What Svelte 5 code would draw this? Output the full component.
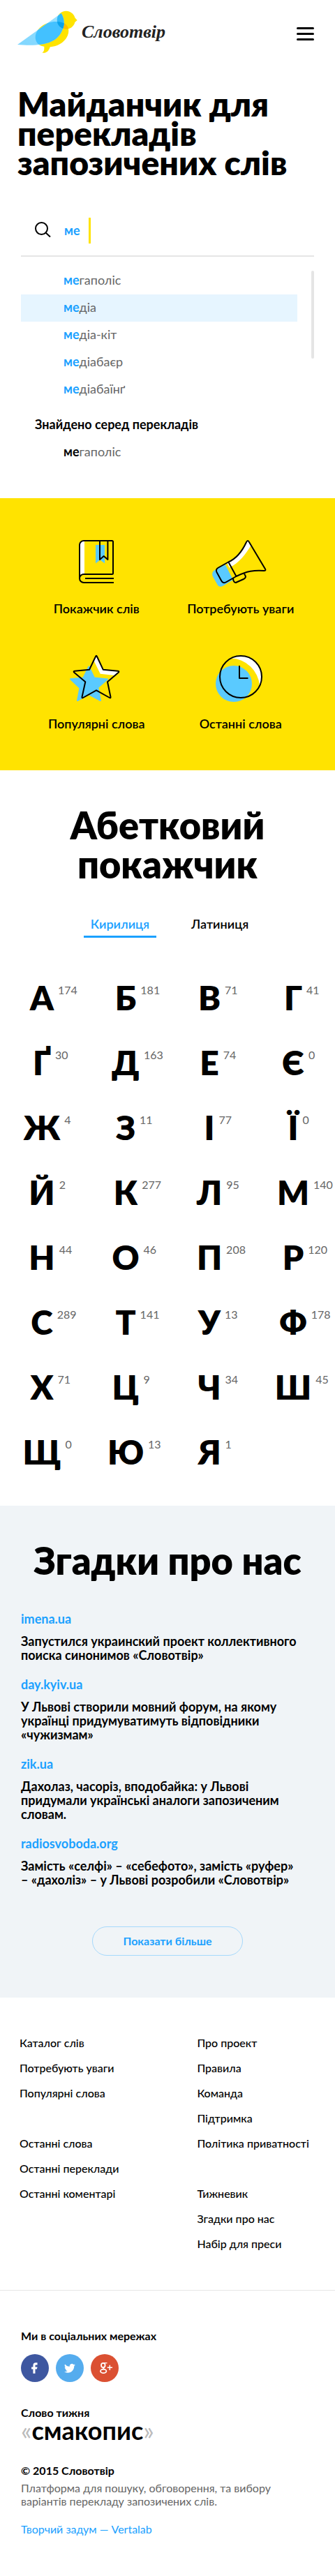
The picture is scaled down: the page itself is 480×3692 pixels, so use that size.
<script>
  let query = $state('ме');
  let script = $state('cyrillic');

  const suggestions = ['гаполіс', 'діа', 'діа-кіт', 'діабаєр', 'діабаїнґ'];
  const selected = 1;

  const letters = [
    ['А', 174], ['Б', 181], ['В', 71], ['Г', 41],
    ['Ґ', 30], ['Д', 163], ['Е', 74], ['Є', 0],
    ['Ж', 4], ['З', 11], ['І', 77], ['Ї', 0],
    ['Й', 2], ['К', 277], ['Л', 95], ['М', 140],
    ['Н', 44], ['О', 46], ['П', 208], ['Р', 120],
    ['С', 289], ['Т', 141], ['У', 13], ['Ф', 178],
    ['Х', 71], ['Ц', 9], ['Ч', 34], ['Ш', 45],
    ['Щ', 0], ['Ю', 13], ['Я', 1]
  ];

  const mentions = [
    ['imena.ua', 'Запустился украинский проект коллективного поиска синонимов «Словотвір»'],
    ['day.kyiv.ua', 'У Львові створили мовний форум, на якому українці придумуватимуть відповідники «чужизмам»'],
    ['zik.ua', 'Дахолаз, часоріз, вподобайка: у Львові придумали українські аналоги запозиченим словам.'],
    ['radiosvoboda.org', 'Замість «селфі» – «себефото», замість «руфер» – «дахоліз» – у Львові розробили «Словотвір»']
  ];

  const footerColumns = [
    [
      ['Каталог слів', 'Потребують уваги', 'Популярні слова'],
      ['Останні слова', 'Останні переклади', 'Останні коментарі']
    ],
    [
      ['Про проект', 'Правила', 'Команда', 'Підтримка', 'Політика приватності'],
      ['Тижневик', 'Згадки про нас', 'Набір для преси']
    ]
  ];
</script>

<header class="top">
  <a class="logo" href="#home">
    <svg width="86" height="62" viewBox="0 0 86 62" aria-hidden="true">
      <defs>
        <linearGradient id="wing" x1="0" y1="1" x2="1" y2="0">
          <stop offset="0" stop-color="#7fd6ff" />
          <stop offset="1" stop-color="#9ce2ff" />
        </linearGradient>
        <clipPath id="clip-wing"><path d="M0 49L62.7 4C68 12 68 22 63 31C55 46 38 52 0 49Z" /></clipPath>
        <clipPath id="clip-head"><circle cx="69.7" cy="13.7" r="13" /></clipPath>
      </defs>
      <path fill="#ffe300" d="M38.3 50C38.5 56 38.500 58.500 35.500 60.500C41 62 45.500 58 47 51Z" />
      <path fill="#ffe300" d="M25.700 38C26 26 40 16 55 16C66 16 73.300 20 73.300 29C73 42 60 52.300 45 52.300C33 52.300 25.700 48 25.700 38Z" />
      <circle fill="#ffe300" cx="69.7" cy="13.7" r="13" />
      <path fill="#ffe300" d="M81.500 9.500L85.700 14L81.500 17.500Z" />
      <g clip-path="url(#clip-head)">
        <path fill="#ffbd00" d="M25.700 38C26 26 40 16 55 16C66 16 73.300 20 73.300 29C73 42 60 52.300 45 52.300C33 52.300 25.700 48 25.700 38Z" />
      </g>
      <path fill="url(#wing)" d="M0 49L62.700 4C68 12 68 22 63 31C55 46 38 52 0 49Z" />
      <g clip-path="url(#clip-wing)">
        <path fill="#43c1ff" d="M25.700 38C26 26 40 16 55 16C66 16 73.300 20 73.300 29C73 42 60 52.300 45 52.300C33 52.300 25.700 48 25.700 38Z" />
        <circle fill="#31b9f8" cx="69.7" cy="13.7" r="13" />
        <g clip-path="url(#clip-head)">
          <path fill="#0aa2ea" d="M25.700 38C26 26 40 16 55 16C66 16 73.300 20 73.300 29C73 42 60 52.300 45 52.300Z" />
        </g>
      </g>
    </svg>
    <span>Словотвір</span>
  </a>
  <button class="burger" aria-label="Меню">
    <i></i><i></i><i></i>
  </button>
</header>

<main>
  <section class="hero">
    <h1>Майданчик для перекладів запозичених слів</h1>

    <div class="finder">
      <label class="search">
        <svg width="24" height="24" viewBox="0 0 24 24" aria-hidden="true">
          <circle cx="9.500" cy="9.500" r="8.500" />
          <path d="M15.500 15.500L22 21.500" />
        </svg>
        <input bind:value={query} aria-label="Пошук слова" />
        <i class="caret"></i>
      </label>

      <div class="results">
        <ul>
          {#each suggestions as rest, i}
            <li class:active={i === selected}><a href="#word"><b>ме</b>{rest}</a></li>
          {/each}
        </ul>
        <i class="scrollbar"></i>
      </div>

      <h2 class="found">Знайдено серед перекладів</h2>
      <ul class="translations">
        <li><a href="#word"><b>ме</b>гаполіс</a></li>
      </ul>
    </div>
  </section>

  <nav class="shortcuts">
    <a href="#index">
      <svg width="50" height="62" viewBox="0 0 50 62" aria-hidden="true">
        <path fill="#fff" d="M1 50V7a6 6 0 0 1 6-6h1v48H5z" />
        <path fill="#5acaff" d="M24 7h13v26.500l-6.500-5-6.500 5z" />
        <path class="line" d="M50 61H7a6 6 0 0 1-6-6V7a6 6 0 0 1 6-6h40.500A1.500 1.500 0 0 1 49 2.500V47.500a1.500 1.500 0 0 1-1.500 1.500H7a6 6 0 0 0-6 6M9 55h41M30 1v27l5.700-5 5.700 5V1" />
      </svg>
      Покажчик слів
    </a>
    <a href="#attention">
      <svg width="82" height="62" viewBox="0 0 82 62" aria-hidden="true">
        <path fill="#5acaff" d="M3 43.500L18.700 35L30 57L16 65.500C11 68.500 8.500 66 7 63L1 52.500C-.5 49 0 45.500 3 43.500Z" />
        <path fill="#fff" d="M51 1L55.500 8C48 20 39 33 24.500 39.500L21 32C36 25 43 14 51 1Z" />
        <path class="line" d="M23.300 31.500C36 26 43 16 49 3Q51 -1 53 3L76 41.500Q77.500 44 74 44C60 43 50 44.500 34.500 52L23.300 31.500L9 39.500Q4.500 42 6.500 46L13 58Q15.500 63 20.500 60L34.500 52M30 55L30.500 58Q32 62 35 60.500L45 56Q49 54 47.500 51L46 48.500" />
      </svg>
      Потребують уваги
    </a>
    <a href="#popular">
      <svg width="76" height="62" viewBox="0 0 76 62" aria-hidden="true">
        <path fill="#5acaff" stroke="#5acaff" stroke-width="2" stroke-linejoin="round" d="M27.300 16.500L35 32.500L54 34.500L40.300 46.300L44 65L27.300 56L11 65L14.500 47L1 34.300L19.500 32.500Z" />
        <path fill="#fff" d="M38 2L47.700 20.700L70 23.500L64 29L43.700 26.700L34.500 8Z" />
        <path class="line" d="M39 2L47.700 20.700L69 22.800Q71.500 23.200 69.500 25L54 38.300L58.500 60Q58.800 62 57 61L38 50.300L19 61Q17.200 62 17.500 60L22.300 38.300L6.500 25Q4.500 23.200 7 22.800L28 20.700L37 2Q38 -.5 39 2Z" />
      </svg>
      Популярні слова
    </a>
    <a href="#latest">
      <svg width="72" height="62" viewBox="0 0 72 62" aria-hidden="true">
        <circle fill="#5acaff" cx="26" cy="41" r="26" />
        <path fill="#fff" d="M22 4.300A30 30 0 0 1 63 43.500A43 43 0 0 0 22 4.300Z" />
        <circle class="line" cx="36" cy="31" r="30" />
        <path class="line" d="M34 15V33H46.500" />
      </svg>
      Останні слова
    </a>
  </nav>

  <section class="alphabet">
    <h2>Абетковий покажчик</h2>
    <div class="tabs">
      <button class:on={script === 'cyrillic'} onclick={() => (script = 'cyrillic')}>Кирилиця</button>
      <button class:on={script === 'latin'} onclick={() => (script = 'latin')}>Латиниця</button>
    </div>
    <div class="letters">
      {#each letters as [letter, count]}
        <a href="#letter"><b>{letter}</b><span>{count}</span></a>
      {/each}
    </div>
  </section>

  <section class="mentions">
    <h2>Згадки про нас</h2>
    {#each mentions as [source, title]}
      <article>
        <a href="#source">{source}</a>
        <p>{title}</p>
      </article>
    {/each}
    <button class="more">Показати більше</button>
  </section>
</main>

<footer>
  <nav class="links">
    {#each footerColumns as column}
      <div>
        {#each column as group}
          <ul>
            {#each group as item}
              <li><a href="#page">{item}</a></li>
            {/each}
          </ul>
        {/each}
      </div>
    {/each}
  </nav>

  <div class="about">
    <h3>Ми в соціальних мережах</h3>
    <div class="social">
      <a href="#facebook" aria-label="Facebook">
        <svg width="40" height="40" viewBox="0 0 40 40" aria-hidden="true">
          <circle cx="20" cy="20" r="20" fill="#3e57a0" />
          <path fill="#fff" transform="translate(9.700 10.800) scale(.77)" d="M18 2h-3a5 5 0 0 0-5 5v3H7v4h3v8h4v-8h3l1-4h-4V7a1 1 0 0 1 1-1h3z" />
        </svg>
      </a>
      <a href="#twitter" aria-label="Twitter">
        <svg width="40" height="40" viewBox="0 0 40 40" aria-hidden="true">
          <circle cx="20" cy="20" r="20" fill="#55acee" />
          <path fill="#fff" transform="translate(12 12.400) scale(.66)" d="M23.953 4.570a10 10 0 01-2.825.775 4.958 4.958 0 002.163-2.723c-.951.555-2.005.959-3.127 1.184a4.920 4.920 0 00-8.384 4.482C7.690 8.095 4.067 6.130 1.640 3.162a4.822 4.822 0 00-.666 2.475c0 1.710.870 3.213 2.188 4.096a4.904 4.904 0 01-2.228-.616v.06a4.923 4.923 0 003.946 4.827 4.996 4.996 0 01-2.212.085 4.936 4.936 0 004.604 3.417 9.867 9.867 0 01-6.102 2.105c-.39 0-.779-.023-1.170-.067a13.995 13.995 0 007.557 2.209c9.053 0 13.998-7.496 13.998-13.985 0-.21 0-.42-.015-.63A9.935 9.935 0 0024 4.590z" />
        </svg>
      </a>
      <a href="#google" aria-label="Google+">
        <svg width="40" height="40" viewBox="0 0 40 40" aria-hidden="true">
          <circle cx="20" cy="20" r="20" fill="#db5032" />
          <g fill="none" stroke="#fff">
            <ellipse cx="17.800" cy="16" rx="2.800" ry="3.200" stroke-width="1.800" />
            <path stroke-width="1.300" d="M17.500 12.700H23.500" />
            <path stroke-width="1.800" d="M19.800 18.500Q17.300 20 18.800 21.300" />
            <ellipse cx="18.200" cy="24.400" rx="4.200" ry="2.700" stroke-width="1.800" />
            <path stroke-width="1.500" d="M27.300 15.700V23M23.700 19.300H31" />
          </g>
        </svg>
      </a>
    </div>

    <h3>Слово тижня</h3>
    <p class="word"><i>«</i>смакопис<i>»</i></p>

    <h3>© 2015 Словотвір</h3>
    <p class="description">Платформа для пошуку, обговорення, та вибору варіантів перекладу запозичених слів.</p>
    <a class="credit" href="#vertalab">Творчий задум — Vertalab</a>
  </div>
</footer>

<style>
  :global(body) {
    background: #fff;
    color: #000;
    font-family: Lato, Roboto, sans-serif;
    font-size: 18px;
    line-height: 24px;
  }

  h1, h2, h3, p, ul {
    margin: 0;
    padding: 0;
  }

  ul {
    list-style: none;
  }

  a {
    color: inherit;
    text-decoration: none;
  }

  button, input {
    padding: 0;
    border: 0;
    background: none;
    font: inherit;
  }

  svg {
    display: block;
    overflow: visible;
  }

  h2 {
    font-size: 54px;
    line-height: 56px;
    font-weight: 800;
    text-align: center;
  }

  .top {
    display: flex;
    justify-content: space-between;
    align-items: center;
    padding: 15px 30px 15px 25px;
  }

  .logo {
    display: flex;
    align-items: center;
    gap: 6px;
    color: #222;
    font: italic 700 26px/40px "Liberation Serif", serif;
  }

  .burger {
    display: flex;
    flex-direction: column;
    gap: 5px;
    width: 25px;
    padding-top: 5px;
  }

  .burger i {
    height: 3px;
    border-radius: 2px;
    background: #000;
  }

  .hero {
    padding: 36px 30px 46px 25px;
  }

  h1 {
    font-size: 48px;
    line-height: 42px;
    font-weight: 800;
  }

  .finder {
    margin: 40px 0 0 5px;
  }

  .search {
    position: relative;
    display: flex;
    align-items: center;
    gap: 18px;
    height: 72px;
    padding-left: 20px;
    border-bottom: 2px solid #e5e5e5;
  }

  .search svg {
    fill: none;
    stroke: #000;
    stroke-width: 2;
  }

  .search input {
    flex: 1;
    min-width: 0;
    color: #1ba1ff;
    font-weight: 700;
    outline: none;
  }

  .caret {
    position: absolute;
    left: 97px;
    top: 18px;
    width: 3px;
    height: 37px;
    background: #ffe300;
  }

  .results {
    display: flex;
    gap: 20px;
    padding-top: 15px;
  }

  .results ul {
    flex: 1;
  }

  .finder li {
    padding: 0 0 3px 61px;
    color: #666;
    line-height: 36px;
  }

  .finder li.active {
    background: #e6f5ff;
  }

  .results b {
    color: #1ba1ff;
  }

  .translations b {
    color: #000;
  }

  .scrollbar {
    width: 4px;
    height: 126px;
    margin-top: 5px;
    border-radius: 2px;
    background: #e5e5e5;
  }

  .found {
    margin-top: 12px;
    padding: 0 20px 3px;
    font-size: 18px;
    line-height: 36px;
    font-weight: 700;
    text-align: left;
  }

  .shortcuts {
    display: grid;
    grid-template-columns: 1fr 1fr;
    gap: 55px 30px;
    padding: 60px 47px 55px 50px;
    background: #ffe300;
    font-weight: 600;
  }

  .shortcuts a {
    display: flex;
    flex-direction: column;
    align-items: center;
    gap: 24px;
  }

  .line {
    fill: none;
    stroke: #000;
    stroke-width: 2;
    stroke-linejoin: round;
  }

  .alphabet {
    padding: 51px 0 47px;
  }

  .alphabet h2 {
    padding: 0 60px;
  }

  .tabs {
    display: flex;
    justify-content: center;
    gap: 40px;
    margin: 45px 0 56px;
    padding-left: 6px;
  }

  .tabs button {
    padding: 0 10px 5px;
    border-bottom: 3px solid transparent;
    font-weight: 600;
    cursor: pointer;
  }

  .tabs .on {
    border-color: #1ba1ff;
    color: #1ba1ff;
  }

  .letters {
    display: grid;
    grid-template-columns: repeat(4, 1fr);
    row-gap: 33px;
  }

  .letters a {
    display: grid;
    grid-template-columns: 1fr auto 1fr;
    column-gap: 6px;
  }

  .letters b {
    grid-column: 2;
    font-size: 48px;
    line-height: 60px;
    font-weight: 800;
  }

  .letters span {
    padding-top: 9px;
    color: #666;
    font-size: 16px;
    line-height: 20px;
  }

  .mentions {
    padding: 51px 30px 60px;
    background: #f0f4f7;
    font-weight: 700;
    line-height: 20px;
  }

  .mentions h2 {
    margin: 0 -20px 45px;
  }

  article {
    margin-bottom: 22px;
    padding-right: 20px;
  }

  article a {
    display: block;
    margin-bottom: 12px;
    color: #1ba1ff;
  }

  .more {
    display: block;
    width: 216px;
    height: 42px;
    margin: 57px auto 0;
    border: 1px solid #a6d9fc;
    border-radius: 21px;
    color: #1ba1ff;
    font-size: 16px;
    font-weight: 700;
    cursor: pointer;
  }

  footer {
    font-size: 16px;
    line-height: 20px;
  }

  .links {
    display: grid;
    grid-template-columns: 6fr 4fr;
    padding: 55px 28px 56px;
    border-bottom: 1px solid #e5e5e5;
    white-space: nowrap;
    font-weight: 500;
  }

  .links li + li {
    margin-top: 16px;
  }

  .links ul + ul {
    margin-top: 52px;
  }

  .about {
    padding: 55px 30px 56px;
  }

  h3 {
    font-size: 16px;
    font-weight: 700;
  }

  .social {
    display: flex;
    gap: 10px;
    margin: 16px 0 34px;
  }

  .word {
    margin-bottom: 33px;
    font-size: 36px;
    line-height: 30px;
    font-weight: 700;
  }

  .word i {
    color: #bbb;
    font-style: normal;
    font-weight: 400;
  }

  .description {
    margin: 5px 0 21px;
    color: #666;
    line-height: 19px;
  }

  .credit {
    display: block;
    color: #1ba1ff;
  }
</style>
